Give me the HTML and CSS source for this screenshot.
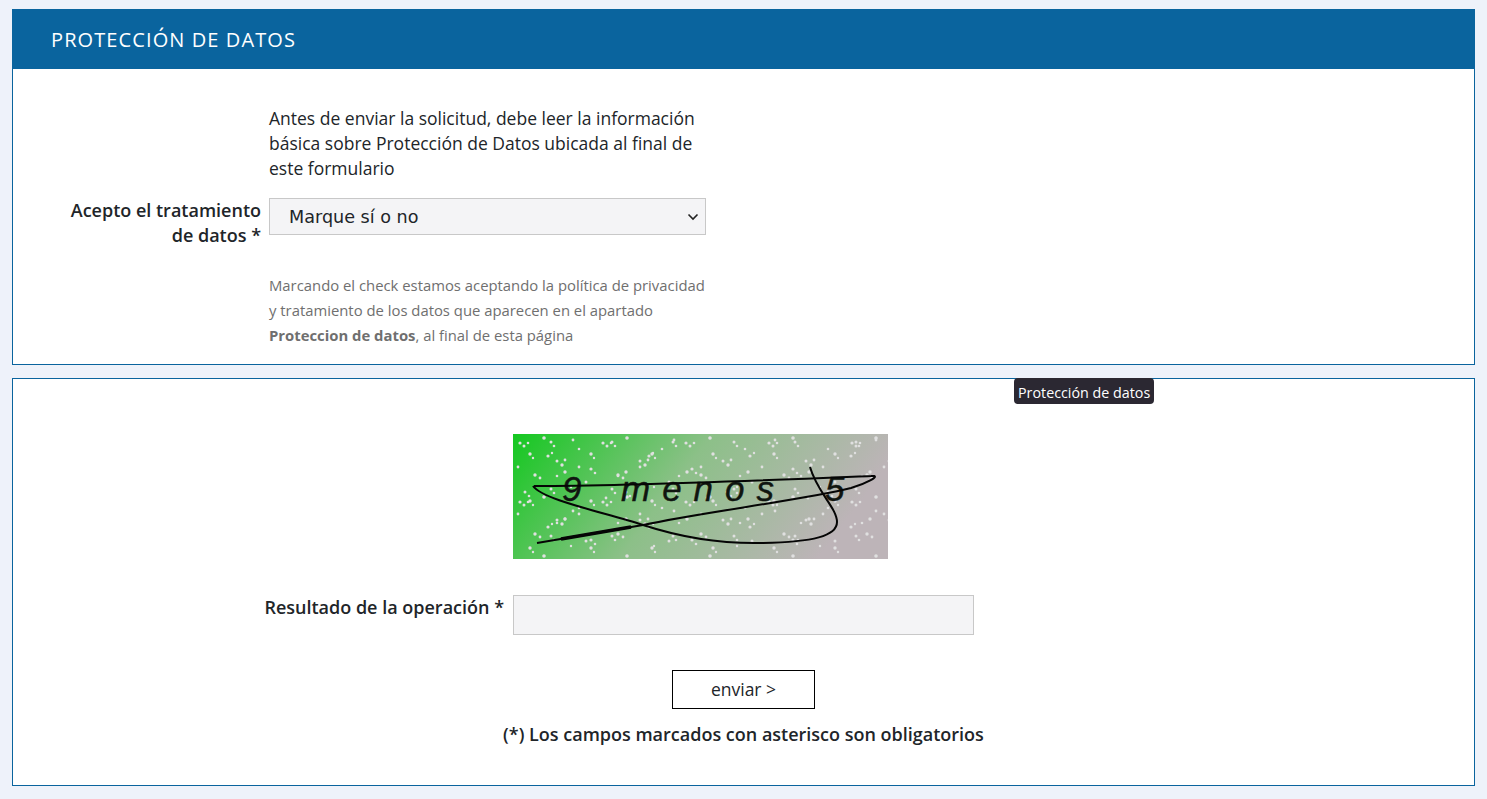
FILE: index.html
```html
<!DOCTYPE html>
<html lang="en">

<head>
    <meta charset="UTF-8">
    <meta name="viewport" content="width=device-width, initial-scale=1.0">
    <title>Protección de datos</title>
    <link rel="stylesheet" href="styles.css">
</head>

<body>
    <section class="panel panel-top">
        <h2 class="panel-title">Protección de datos</h2>
        <div class="panel-body">
            <div class="form-row">
                <div></div>
                <p class="intro">Antes de enviar la solicitud, debe leer la información básica sobre Protección de Datos ubicada al final de este formulario</p>
            </div>
            <div class="form-row row-select">
                <label class="field-label label-narrow" for="acepto">Acepto el tratamiento de datos *</label>
                <select class="field-select" id="acepto">
                    <option>Marque sí o no</option>
                    <option>Sí</option>
                    <option>No</option>
                </select>
            </div>
            <div class="form-row row-help">
                <div></div>
                <p class="help">Marcando el check estamos aceptando la política de privacidad y tratamiento de los datos que aparecen en el apartado <strong>Proteccion de datos</strong>, al final de esta página</p>
            </div>
        </div>
    </section>

    <section class="panel panel-bottom">
        <span class="tooltip">Protección de datos</span>
        <div class="captcha-row">
            <div></div>
            <svg class="captcha" width="375" height="125" viewBox="0 0 375 125">
                <defs>
                    <linearGradient id="captcha-bg" x1="0" y1="0" x2="1" y2="0.25">
                        <stop offset="0" stop-color="#14c820" />
                        <stop offset="0.5" stop-color="#8cc088" />
                        <stop offset="1" stop-color="#bdb4b8" />
                    </linearGradient>
                    <pattern id="dots-a" width="83" height="59" patternUnits="userSpaceOnUse">
                        <circle cx="7" cy="9" r="1.6" />
                        <circle cx="11" cy="12" r="1.5" />
                        <circle cx="15" cy="9" r="1.3" />
                        <circle cx="31" cy="4" r="1.8" />
                        <circle cx="44" cy="27" r="1.5" />
                        <circle cx="49" cy="31" r="1.7" />
                        <circle cx="52" cy="26" r="1.4" />
                        <circle cx="66" cy="15" r="1.3" />
                        <circle cx="22" cy="41" r="1.7" />
                        <circle cx="27" cy="44" r="1.4" />
                        <circle cx="73" cy="48" r="1.5" />
                        <circle cx="58" cy="53" r="1.2" />
                    </pattern>
                    <pattern id="dots-b" width="61" height="47" patternUnits="userSpaceOnUse">
                        <circle cx="5" cy="33" r="1.4" />
                        <circle cx="17" cy="20" r="1.7" />
                        <circle cx="20" cy="24" r="1.2" />
                        <circle cx="38" cy="8" r="1.5" />
                        <circle cx="41" cy="12" r="1.3" />
                        <circle cx="52" cy="38" r="1.7" />
                        <circle cx="44" cy="42" r="1.3" />
                    </pattern>
                    <pattern id="dots-c" width="101" height="71" patternUnits="userSpaceOnUse">
                        <circle cx="12" cy="58" r="1.5" />
                        <circle cx="16" cy="62" r="1.3" />
                        <circle cx="35" cy="22" r="1.6" />
                        <circle cx="39" cy="19" r="1.2" />
                        <circle cx="60" cy="6" r="1.4" />
                        <circle cx="78" cy="35" r="1.6" />
                        <circle cx="82" cy="39" r="1.3" />
                        <circle cx="93" cy="64" r="1.4" />
                    </pattern>
                </defs>
                <g class="captcha-noise">
                    <rect width="375" height="125" fill="url(#captcha-bg)" />
                    <rect width="375" height="125" fill="url(#dots-a)" />
                    <rect width="375" height="125" fill="url(#dots-b)" />
                    <rect width="375" height="125" fill="url(#dots-c)" />
                </g>
                <text x="49" y="67" class="captcha-text">9</text>
                <text x="108" y="67" class="captcha-text spaced">menos</text>
                <text x="312" y="67" class="captcha-text">5</text>
                <path class="captcha-line" d="M21 52 C120 52 260 46 358 42 C370 41 352 50 338 54 C290 66 190 78 130 91 L24 109" />
                <path class="captcha-line" d="M20 52 C30 66 90 78 130 91 C170 104 210 110 250 109 C300 108 324 102 324 88 C324 74 304 58 297 33" />
                <path class="captcha-line thick" d="M48 105 L118 93" />
            </svg>
        </div>
        <div class="form-row-wide">
            <label class="field-label" for="resultado">Resultado de la operación *</label>
            <input class="field-input" id="resultado" type="text">
        </div>
        <div class="actions">
            <button class="btn-send">enviar &gt;</button>
            <p class="note">(*) Los campos marcados con asterisco son obligatorios</p>
        </div>
    </section>
</body>

</html>
```

FILE: styles.css
```css
* {
    margin: 0;
    padding: 0;
    box-sizing: border-box;
}

body {
    background-color: #eef2fa;
    font-family: "Open Sans", Arial, sans-serif;
    font-size: 17.5px;
    line-height: 25px;
    color: #212529;
    padding: 9px 12px 13px;
}

.panel {
    background-color: white;
    border: 1px solid #0a649e;
    position: relative;
}

.panel-top {
    height: 356px;
}

.panel-bottom {
    margin-top: 13px;
    height: 408px;
    padding-top: 55px;
}

.panel-title {
    background-color: #0a649e;
    color: white;
    height: 60px;
    margin: -1px -1px 0;
    padding-left: 39px;
    font-size: 20px;
    font-weight: 400;
    line-height: 61px;
    letter-spacing: 1.1px;
    text-transform: uppercase;
}

.panel-body {
    padding-top: 37px;
}

.form-row {
    display: grid;
    grid-template-columns: 248px 437px;
    column-gap: 8px;
}

.row-select {
    margin-top: 17px;
}

.row-help {
    margin-top: 25px;
}

.field-label {
    font-size: 18px;
    font-weight: 600;
    text-align: right;
}

.label-narrow {
    padding-left: 48px;
}

.field-select {
    height: 37px;
    appearance: none;
    background-color: #f4f4f6;
    background-image: url("data:image/svg+xml,%3Csvg xmlns='http://www.w3.org/2000/svg' width='12' height='8' viewBox='0 0 12 8'%3E%3Cpath d='M1.5 1.5 6 6l4.5-4.5' fill='none' stroke='%23222' stroke-width='1.6'/%3E%3C/svg%3E");
    background-repeat: no-repeat;
    background-position: right 6px center;
    border: 1px solid #c8c8c8;
    color: #212529;
    font-family: "DejaVu Sans", sans-serif;
    font-size: 17.6px;
    padding-left: 19px;
}

.help {
    font-size: 14.85px;
    color: #6f6f6f;
}

.captcha-row {
    display: grid;
    grid-template-columns: 491px 375px;
    column-gap: 9px;
}

.captcha {
    display: block;
}

.captcha-noise {
    filter: blur(0.5px);
}

pattern circle {
    fill: #e0e0e0;
}

.captcha-text {
    font-family: "Liberation Sans", Arial, sans-serif;
    font-style: italic;
    font-size: 35px;
    fill: #101510;
    stroke: #101510;
    stroke-width: 0.4;
}

.spaced {
    letter-spacing: 12px;
}

.captcha-line {
    fill: none;
    stroke: #050505;
    stroke-width: 2;
}

.thick {
    stroke-width: 3.5;
}

.form-row-wide {
    display: grid;
    grid-template-columns: 491px 461px;
    column-gap: 9px;
    margin-top: 36px;
}

.field-input {
    height: 40px;
    background-color: #f4f4f6;
    border: 1px solid #c8c8c8;
}

.actions {
    display: flex;
    flex-direction: column;
    align-items: center;
    margin-top: 35px;
}

.btn-send {
    width: 143px;
    height: 39px;
    padding-bottom: 2px;
    background-color: white;
    border: 1px solid black;
    color: #212529;
    font-family: "Open Sans", Arial, sans-serif;
    font-size: 17.5px;
}

.note {
    margin-top: 13px;
    font-size: 18px;
    font-weight: 600;
}

.tooltip {
    position: absolute;
    left: 1001px;
    top: -1px;
    background-color: #2b2832;
    color: white;
    font-size: 14.3px;
    line-height: 20px;
    padding: 5px 4px 1px;
    border-radius: 4px;
}
```
